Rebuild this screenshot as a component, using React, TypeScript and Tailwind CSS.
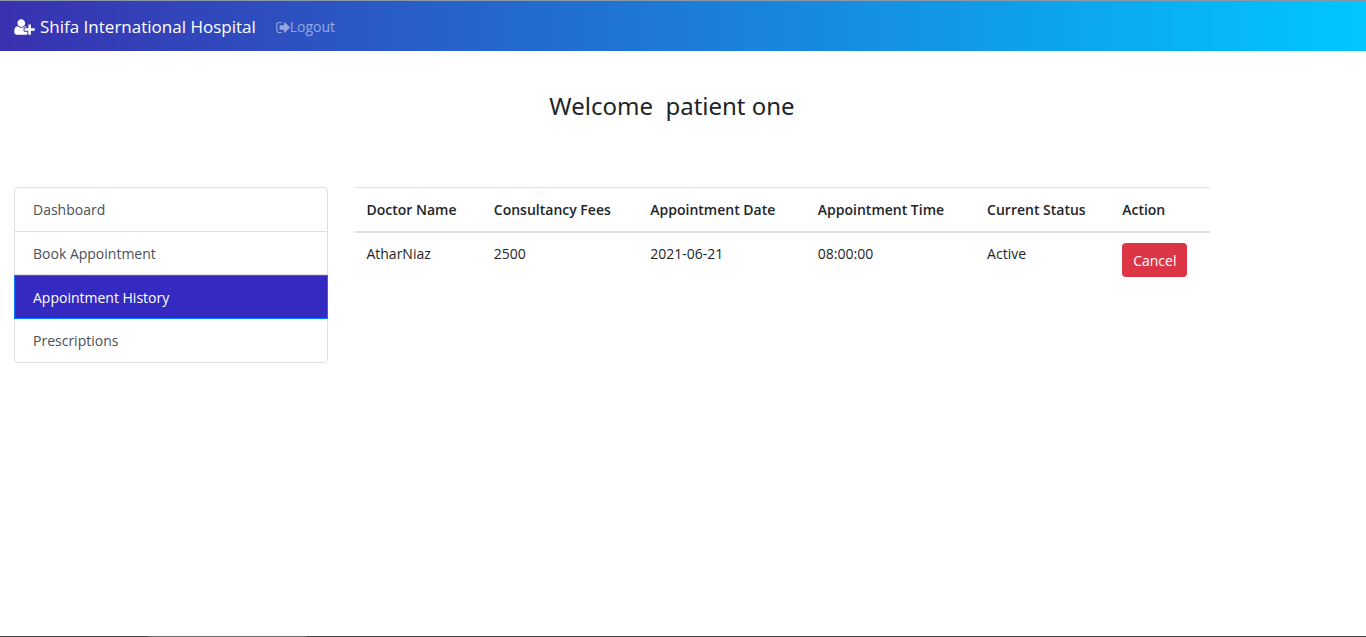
const menu = [
  { label: 'Dashboard', active: false },
  { label: 'Book Appointment', active: false },
  { label: 'Appointment History', active: true },
  { label: 'Prescriptions', active: false },
];

const columns = [
  { label: 'Doctor Name', width: 'w-[14.9%]' },
  { label: 'Consultancy Fees', width: 'w-[18.3%]' },
  { label: 'Appointment Date', width: 'w-[19.6%]' },
  { label: 'Appointment Time', width: 'w-[19.8%]' },
  { label: 'Current Status', width: 'w-[15.8%]' },
  { label: 'Action', width: 'w-[11.6%]' },
];

const appointments = [
  { doctor: 'AtharNiaz', fees: '2500', date: '2021-06-21', time: '08:00:00', status: 'Active' },
];

function UserPlusIcon() {
  return (
    <svg viewBox="0 0 2048 1792" className="h-[18px] w-[21px] shrink-0" fill="currentColor" aria-hidden="true">
      <path d="M704 896q-159 0-271.5-112.5t-112.5-271.5 112.5-271.5 271.5-112.5 271.5 112.5 112.5 271.5-112.5 271.5-271.5 112.5zm960 128h352q13 0 22.5 9.5t9.5 22.5v192q0 13-9.5 22.5t-22.5 9.5h-352v352q0 13-9.5 22.5t-22.5 9.5h-192q-13 0-22.5-9.5t-9.5-22.5v-352h-352q-13 0-22.5-9.5t-9.5-22.5v-192q0-13 9.5-22.5t22.5-9.5h352v-352q0-13 9.5-22.5t22.5-9.5h192q13 0 22.5 9.5t9.5 22.5v352zm-736 224q0 52 38 90t90 38h256v238q-68 50-171 50h-874q-121 0-194-69t-73-190q0-53 3.5-103.5t14-109 26.5-108.5 43-97.5 62-81 85.5-53.5 111.5-20q19 0 39 17 79 61 154.5 91.5t164.5 30.5 164.5-30.5 154.5-91.5q20-17 39-17 132 0 217 96h-223q-52 0-90 38t-38 90v192z" />
    </svg>
  );
}

function SignOutIcon() {
  return (
    <svg viewBox="0 256 1568 1280" className="h-[11px] w-[14px] shrink-0" fill="currentColor" aria-hidden="true">
      <path d="M640 1440q0 4 1 20t.5 26.5-3 23.5-10 19.5-20.5 6.5h-320q-119 0-203.5-84.5t-84.5-203.5v-704q0-119 84.5-203.5t203.5-84.5h320q13 0 22.5 9.5t9.5 22.5q0 4 1 20t.5 26.5-3 23.5-10 19.5-20.5 6.5h-320q-66 0-113 47t-47 113v704q0 66 47 113t113 47h312l11.5 1 11.5 3 8 5.5 7 9 2 13.5zm928-544q0 26-19 45l-544 544q-19 19-45 19t-45-19-19-45v-288h-448q-26 0-45-19t-19-45v-384q0-26 19-45t45-19h448v-288q0-26 19-45t45-19 45 19l544 544q19 19 19 45z" />
    </svg>
  );
}

export default function App() {
  return (
    <div className="flex min-h-screen flex-col bg-white font-['Open_Sans','Noto_Sans',sans-serif] text-sm text-[#212529]">
      <nav className="flex h-[51px] items-center border-t border-[#8a98a8] bg-linear-to-r/srgb from-[#3931af] to-[#00c6ff] px-[14px] pt-0.5">
        <a href="#home" className="flex items-center gap-[5px] text-[17px] text-white">
          <UserPlusIcon />
          Shifa International Hospital
        </a>
        <a href="#logout" className="ml-5 flex items-center text-white/50">
          <SignOutIcon />
          Logout
        </a>
      </nav>

      <main className="flex-1 px-[14px] pt-[35px]">
        <h1 className="mr-[22px] text-center font-['Noto_Sans',sans-serif] text-2xl leading-10">Welcome&nbsp; patient one</h1>

        <div className="mt-[61px] flex items-start gap-[27px]">
          <ul className="grid h-[176px] w-[23.5%] grid-rows-4 rounded border border-[#dfdfdf]">
            {menu.map((item) => (
              <li
                key={item.label}
                className={
                  item.active
                    ? '-mx-px border border-[#007bff] bg-[#342ac1] text-white'
                    : 'border-b border-[#dfdfdf] text-[#495057] last:border-b-0'
                }
              >
                <a
                  href="#menu"
                  aria-current={item.active ? 'page' : undefined}
                  className="flex h-full items-center px-[18px] pt-0.5"
                >
                  {item.label}
                </a>
              </li>
            ))}
          </ul>

          <table className="w-[63.9%] table-fixed border-collapse text-left">
            <thead>
              <tr className="border-t border-b-2 border-[#dee2e6]">
                {columns.map((column) => (
                  <th key={column.label} scope="col" className={`${column.width} h-11 whitespace-nowrap px-[11px] pt-px font-semibold`}>
                    {column.label}
                  </th>
                ))}
              </tr>
            </thead>
            <tbody>
              {appointments.map((row) => (
                <tr key={row.date + row.time} className="align-top leading-[22px]">
                  <td className="px-[11px] py-[10px]">{row.doctor}</td>
                  <td className="px-[11px] py-[10px]">{row.fees}</td>
                  <td className="px-[11px] py-[10px]">{row.date}</td>
                  <td className="px-[11px] py-[10px]">{row.time}</td>
                  <td className="px-[11px] py-[10px]">{row.status}</td>
                  <td className="px-[11px] py-[10px]">
                    <button type="button" className="h-[34px] rounded bg-[#dc3545] px-[11px] pt-0.5 text-white">
                      Cancel
                    </button>
                  </td>
                </tr>
              ))}
            </tbody>
          </table>
        </div>
      </main>

      <footer className="flex h-px bg-[#444244]">
        <div className="ml-[10.8%] w-[11.7%] bg-[#6b696b]" />
      </footer>
    </div>
  );
}
